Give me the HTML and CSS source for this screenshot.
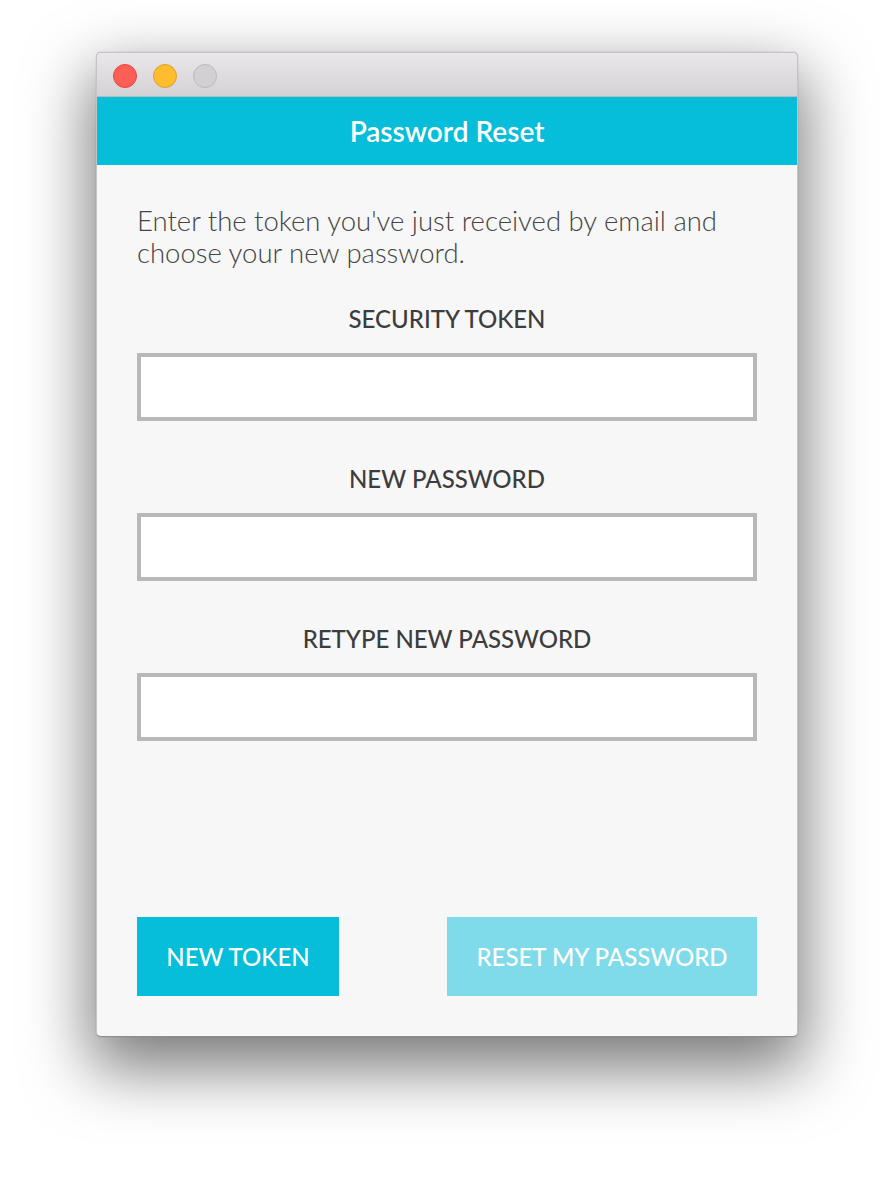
FILE: index.html
```html
<!DOCTYPE html>
<html lang="en">
<head>
<meta charset="utf-8">
<title>Password Reset</title>
<link rel="stylesheet" href="styles.css">
</head>
<body>
<div class="stage">
  <div class="window">
    <div class="titlebar">
      <span class="light light-close"></span>
      <span class="light light-min"></span>
      <span class="light light-max"></span>
    </div>
    <header class="header">Password Reset</header>
    <main class="content">
      <p class="intro">Enter the token you've just received by email and choose your new password.</p>
      <div class="field">
        <label class="field-label">SECURITY TOKEN</label>
        <input class="field-input" type="text">
      </div>
      <div class="field">
        <label class="field-label">NEW PASSWORD</label>
        <input class="field-input" type="password">
      </div>
      <div class="field">
        <label class="field-label">RETYPE NEW PASSWORD</label>
        <input class="field-input" type="password">
      </div>
      <div class="actions">
        <button class="btn btn-primary">NEW TOKEN</button>
        <button class="btn btn-disabled">RESET MY PASSWORD</button>
      </div>
    </main>
  </div>
</div>
</body>
</html>
```
FILE: styles.css
```css
html, body {
  margin: 0;
  padding: 0;
  background: #ffffff;
}
body {
  font-family: Lato, "Open Sans", "Liberation Sans", sans-serif;
}
.stage {
  padding: 52px 95px 148px 96px;
}
.window {
  width: 702px;
  height: 985px;
  box-sizing: border-box;
  border-radius: 5px;
  overflow: hidden;
  background: #f7f7f7;
  display: flex;
  flex-direction: column;
  border: 1px solid #c4c4c4;
  border-bottom-color: #8e8e8e;
  box-shadow: 0 26px 64px 6px rgba(0, 0, 0, 0.52), 0 0 1px rgba(0,0,0,0.4);
}
.titlebar {
  height: 44px;
  flex: none;
  display: flex;
  align-items: center;
  gap: 16px;
  padding-left: 16px;
  padding-top: 2px;
  box-sizing: border-box;
  background: linear-gradient(#e9e7e9, #d4d2d4);
  border-bottom: 1px solid #bcbcbc;
}
.light {
  width: 24px;
  height: 24px;
  box-sizing: border-box;
  border-radius: 50%;
  display: block;
}
.light-close { background: #fd5f57; border: 1px solid #e2463f; }
.light-min { background: #febc2e; border: 1px solid #e1a126; }
.light-max { background: #d2d0d2; border: 1px solid #bcbabc; }
.header {
  height: 68px;
  flex: none;
  background: #06bed9;
  color: #ffffff;
  font-size: 28px;
  font-weight: 600;
  display: flex;
  align-items: center;
  justify-content: center;
}
.content {
  flex: 1;
  display: flex;
  flex-direction: column;
  padding: 40px 40px 40px;
}
.intro {
  margin: 0 0 36px;
  font-size: 27.5px;
  font-weight: 300;
  line-height: 32px;
  color: #444444;
}
.field {
  display: flex;
  flex-direction: column;
  align-items: stretch;
  margin-bottom: 44px;
}
.field-label {
  text-align: center;
  font-size: 24px;
  font-weight: 500;
  line-height: 28px;
  color: #3d3d3d;
  margin-bottom: 20px;
}
.field-input {
  height: 68px;
  box-sizing: border-box;
  border: 4px solid #b8b8b8;
  background: #ffffff;
  margin: 0;
  padding: 0 12px;
  font: inherit;
  outline: none;
}
.actions {
  margin-top: auto;
  display: flex;
  justify-content: space-between;
}
.btn {
  height: 79px;
  border: none;
  margin: 0;
  color: #ffffff;
  font-family: inherit;
  font-size: 24px;
  font-weight: 500;
  padding: 0;
}
.btn-primary {
  width: 202px;
  background: #06bed9;
}
.btn-disabled {
  width: 310px;
  background: #7fdbe9;
}
```
